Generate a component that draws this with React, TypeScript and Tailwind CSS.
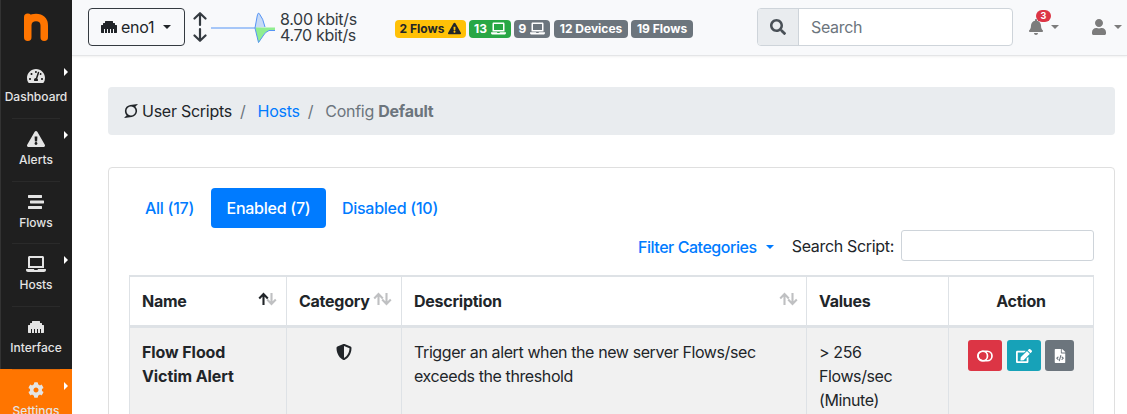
import React from "react";
import {
  FaBell, FaCog, FaEdit, FaEthernet, FaExclamationTriangle, FaFileCode, FaLaptop,
  FaSearch, FaShieldAlt, FaStream, FaSuperpowers, FaTachometerAlt, FaUser,
} from "react-icons/fa";

const navItems = [
  { label: "Dashboard", Icon: FaTachometerAlt, size: 18, arrow: true },
  { label: "Alerts", Icon: FaExclamationTriangle, size: 18, arrow: true },
  { label: "Flows", Icon: FaStream, size: 16, arrow: false },
  { label: "Hosts", Icon: FaLaptop, size: 20, arrow: true },
  { label: "Interface", Icon: FaEthernet, size: 16, arrow: false },
  { label: "Settings", Icon: FaCog, size: 16, arrow: true },
];

function Caret({ className = "" }: { className?: string }) {
  return <span className={`inline-block h-0 w-0 border-x-4 border-t-4 border-x-transparent border-t-current ${className}`} />;
}

function SortArrows({ active = false }: { active?: boolean }) {
  return (
    <svg width="19" height="14" viewBox="0 0 19 14" fill="none" strokeWidth="2.1">
      <g stroke="#bfc0c2">
        <path d="M13.5 1v11M9.200 7.600l4.300 4.300 4.300-4.300" />
      </g>
      <g stroke={active ? "#212529" : "#bfc0c2"}>
        <path d="M5.500 13V2M1.200 6.400l4.300-4.300 4.300 4.300" />
      </g>
    </svg>
  );
}

function Sidebar() {
  return (
    <aside className="flex w-[72px] shrink-0 flex-col bg-[#1f1f1f] text-[#e4e4e4] shadow-[inset_1px_0_0_#333]">
      <div className="flex h-[55px] shrink-0 justify-center pt-3">
        <svg width="26" height="30" viewBox="0 0 26 30" fill="none" stroke="#ff7500" strokeWidth="7.500" strokeLinecap="round">
          <path d="M4.750 5.200v20M4.750 13C5 7.500 9 5.500 13 5.500c5 0 8.250 2.500 8.250 8v11.700" />
        </svg>
      </div>
      {navItems.map(({ label, Icon, size, arrow }, i) => (
        <div
          key={label}
          className={`relative flex h-[62.8px] shrink-0 flex-col items-center pt-[11px] ${label === "Settings" ? "bg-[#ff7500]" : ""}`}
        >
          {i > 0 && <div className={`absolute top-0 h-px w-12 ${label === "Settings" ? "bg-[#e06a08]" : "bg-[#2a2a2a]"}`} />}
          <div className="flex h-5 items-center"><Icon size={size} /></div>
          <div className="pt-px text-[12px] leading-[20px] font-medium">{label}</div>
          {arrow && <span className="absolute top-[13px] right-[4px] h-0 w-0 border-y-4 border-l-4 border-y-transparent border-l-white" />}
        </div>
      ))}
    </aside>
  );
}

function Traffic() {
  return (
    <>
      <svg className="ml-[8px]" width="15" height="30" viewBox="0 0 15 30" fill="none" stroke="#343a40" strokeWidth="2.2" strokeLinecap="round" strokeLinejoin="round">
        <path d="M7 13V1.500M1.500 6.500L7 1.200l5.500 5.300M7 17V28.500M1.500 23.500L7 28.800l5.500-5.300" />
      </svg>
      <svg className="ml-[3px]" width="65" height="34" viewBox="0 0 65 34">
        <path d="M44 18L46.200 6Q47.200 1.500 48.500 4Q52 8 54 17Z" fill="#c6daf7" />
        <path d="M44 17.500H64V20.500H58Q54 22 52 26L47.500 33Z" fill="#90ee90" />
        <path d="M0 18H44L46.200 6Q47.200 1.500 48.500 4Q52 8 54 17M44 18L47.500 32.500L52 26Q54 22 58 20.500H64" fill="none" stroke="#5594f5" strokeWidth="1" />
      </svg>
      <div className="ml-[4px] w-[90px] text-[16px] leading-[16px] tracking-[-0.02em] text-[#343a40]">
        <div>8.00 kbit/s</div>
        <div>4.70 kbit/s</div>
      </div>
    </>
  );
}

function Badge({ className, children }: { className: string; children: React.ReactNode }) {
  return <span className={`flex h-[18px] items-center justify-center gap-1 rounded-[4px] text-[12px] leading-none font-bold whitespace-nowrap ${className}`}>{children}</span>;
}

function Navbar() {
  return (
    <header className="flex h-[56px] shrink-0 items-center border-b border-[#e4e5e7] bg-[#f8f9fb] pb-[2px] pl-4 shadow-[0_1px_2px_rgba(0,0,0,0.06)]">
      <button className="flex h-[38px] w-[97px] items-center rounded-[4px] border border-[#343a40] pl-3 text-[16px] tracking-[-0.02em]">
        <FaEthernet size={16} className="mr-1" />
        eno1
        <Caret className="ml-[9px]" />
      </button>
      <Traffic />
      <div className="ml-[25px] flex pt-[4px]">
        <Badge className="w-[71px] bg-[#ffc107]">2 Flows <FaExclamationTriangle size={13} /></Badge>
        <Badge className="ml-[3px] w-[42px] bg-[#28a745] text-white">13 <FaLaptop size={15} /></Badge>
        <Badge className="ml-[3px] w-[36px] bg-[#6c757d] text-white">9 <FaLaptop size={15} /></Badge>
        <Badge className="ml-[4px] w-[74px] bg-[#6c757d] text-white">12 Devices</Badge>
        <Badge className="ml-[3px] w-[62px] bg-[#6c757d] text-white">19 Flows</Badge>
      </div>
      <div className="ml-[64px] flex h-[38px] w-[256px] overflow-hidden rounded-[4px] border border-[#ced4da] bg-white">
        <div className="flex w-[41px] items-center justify-center border-r border-[#ced4da] bg-[#e9ecef] text-[#495057]"><FaSearch size={16} /></div>
        <div className="flex items-center pl-3 text-[16px] tracking-[-0.02em] text-[#6c757d]">Search</div>
      </div>
      <div className="relative ml-[15px] flex items-center text-[#7c7c7c]">
        <FaBell size={16} />
        <Caret className="ml-[7px]" />
        <span className="absolute -top-[9px] left-[8px] flex h-[12px] w-[15px] items-center justify-center rounded-full bg-[#dc3545] text-[9px] leading-none font-bold text-white">3</span>
      </div>
      <div className="ml-[32px] flex items-center text-[#7c7c7c]">
        <FaUser size={16} />
        <Caret className="ml-[7px]" />
      </div>
    </header>
  );
}

function ScriptTable() {
  const cols = "grid grid-cols-[157px_115px_405px_142px_146px]";
  const head = "flex h-[48px] items-center justify-between border-l border-[#dee2e6] pl-3 text-[16px] font-bold tracking-[-0.016em]";
  const cell = "h-[120px] border-l border-[#dee2e6] bg-[#f1f1f1] px-3 pt-3 text-[16px] leading-6 tracking-[-0.025em]";
  return (
    <div className="border-t-2 border-[#dee2e6]">
      <div className={`${cols} border-b-[3px] border-[#dee2e6]`}>
        <div className={`${head} pr-[9px]`}>Name<span className="-mt-1"><SortArrows active /></span></div>
        <div className={`${head} pr-[9px]`}>Category<span className="-mt-1"><SortArrows /></span></div>
        <div className={`${head} pr-[8px]`}>Description<span className="-mt-1"><SortArrows /></span></div>
        <div className={head}>Values</div>
        <div className={`${head} justify-center! border-r pl-0!`}>Action</div>
      </div>
      <div className={cols}>
        <div className={`${cell} font-bold tracking-[-0.005em]!`}>Flow Flood<br />Victim Alert</div>
        <div className={`${cell} flex justify-center`}><FaShieldAlt size={16} className="mt-1" /></div>
        <div className={cell}>Trigger an alert when the new server Flows/sec<br />exceeds the threshold</div>
        <div className={cell}>&gt; 256<br />Flows/sec<br />(Minute)</div>
        <div className={`${cell} flex items-start border-r pl-[19px] text-white`}>
          <button className="flex h-[31px] w-[34px] items-center justify-center rounded-[3px] bg-[#dc3545]">
            <svg width="16" height="12" viewBox="0 0 16 12" fill="none" stroke="currentColor" strokeWidth="1.7">
              <rect x="1" y="1.250" width="14" height="9.500" rx="4.750" />
              <circle cx="5.750" cy="6" r="4.750" />
            </svg>
          </button>
          <button className="ml-[5px] flex h-[31px] w-[34px] items-center justify-center rounded-[3px] bg-[#17a2b8]"><FaEdit size={16} /></button>
          <button className="ml-[4px] flex h-[31px] w-[29px] items-center justify-center rounded-[3px] bg-[#6c757d]"><FaFileCode size={14} /></button>
        </div>
      </div>
    </div>
  );
}

export default function App() {
  return (
    <div className="flex h-[414px] w-[1127px] overflow-hidden bg-white font-['Inter',sans-serif] text-[#212529]">
      <Sidebar />
      <div className="flex min-w-0 grow flex-col">
        <Navbar />
        <main className="mt-[31px] mr-3 ml-9">
          <nav className="flex h-[48px] items-center rounded-[4px] bg-[#e9ecef] pl-[15px] text-[16px] tracking-[-0.016em]">
            <FaSuperpowers size={16} className="mr-[3px]" />
            <span>User Scripts</span>
            <span className="ml-2 text-[#6c757d]">/</span>
            <span className="ml-3 text-[#007bff]">Hosts</span>
            <span className="ml-2 text-[#6c757d]">/</span>
            <span className="ml-3 text-[#6c757d]">Config <b>Default</b></span>
          </nav>
          <section className="mt-8 h-[300px] rounded-[4px] border border-[#dfdfdf] px-5 pt-5">
            <div className="flex h-[40px] text-[16px] font-medium tracking-[-0.016em] text-[#007bff]">
              <div className="flex w-[82px] items-center justify-center pr-px">All (17)</div>
              <div className="flex w-[115px] items-center justify-center rounded-[4px] bg-[#007bff] text-white">Enabled (7)</div>
              <div className="flex w-[128px] items-center justify-center">Disabled (10)</div>
            </div>
            <div className="mt-[2px] flex h-[31px] items-center justify-end text-[16px] tracking-[-0.02em]">
              <div className="flex items-center pt-[3px] font-medium tracking-[-0.028em] text-[#007bff]">Filter Categories<Caret className="ml-[9px]" /></div>
              <span className="ml-[18px]">Search Script:</span>
              <input aria-label="Search Script" className="ml-[7px] h-[31px] w-[193px] rounded-[3px] border border-[#ced4da] bg-white outline-none" />
            </div>
            <div className="mt-[14px]"><ScriptTable /></div>
          </section>
        </main>
      </div>
    </div>
  );
}
